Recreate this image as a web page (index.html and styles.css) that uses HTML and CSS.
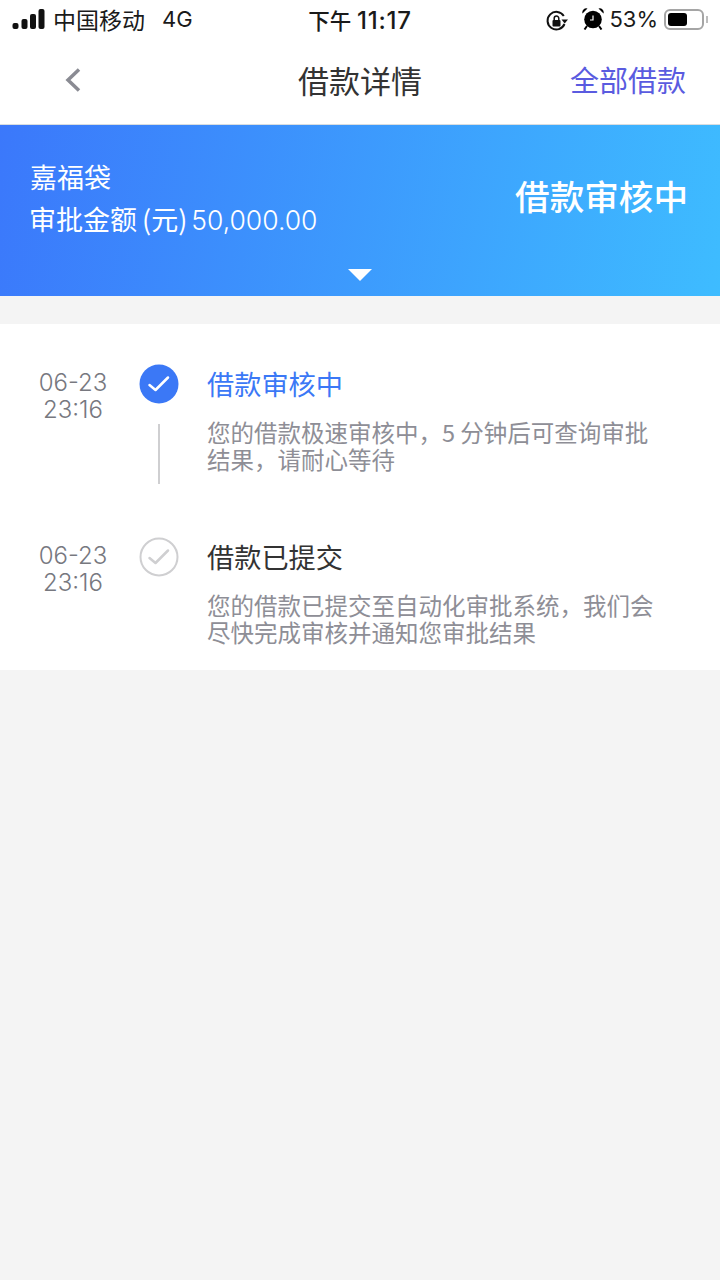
FILE: index.html
```html
<!DOCTYPE html>
<html lang="zh">
<head>
    <meta charset="UTF-8">
    <meta name="viewport" content="width=device-width, initial-scale=1.0">
    <title>借款详情</title>
    <link rel="stylesheet" href="styles.css">
</head>
<body>
    <div class="status-bar">
        <div class="status-left">
            <svg class="signal" width="33" height="20" viewBox="0 0 33 20">
                <rect x="0.500" y="14" width="6" height="6" rx="2"/>
                <rect x="9.500" y="10" width="6" height="10" rx="2"/>
                <rect x="18" y="5" width="6" height="15" rx="2"/>
                <rect x="26.500" y="0" width="6" height="20" rx="2"/>
            </svg>
            <span class="carrier">中国移动</span>
            <span class="network">4G</span>
        </div>
        <div class="status-time">下午 <span class="clock">11:17</span></div>
        <div class="status-right">
            <svg class="lock-icon" width="22" height="22" viewBox="0 0 22 22">
                <path d="M18.500 14A8.800 8.800 0 1 1 17.800 6" fill="none" stroke="#111" stroke-width="2"/>
                <path d="M22 9.500h-6.500l3.200 4z" fill="#111"/>
                <rect x="6.500" y="10" width="8" height="6.500" rx="1" fill="#111"/>
                <path d="M8.200 10V8.300a2.300 2.300 0 0 1 4.600 0V10" fill="none" stroke="#111" stroke-width="1.500"/>
            </svg>
            <svg class="alarm-icon" width="22" height="23" viewBox="0 0 22 23">
                <circle cx="11" cy="12.500" r="8.800" fill="#000"/>
                <path d="M0.500 6.500a4 4 0 0 1 5-5z M21.500 6.500a4 4 0 0 0 -5-5z" fill="#000"/>
                <path d="M5 19l-2.500 3.500M17 19l2.500 3.500" stroke="#000" stroke-width="2"/>
                <path d="M11 8.500v4.500H8" fill="none" stroke="#fff" stroke-width="1.200"/>
            </svg>
            <span class="battery-text">53%</span>
            <div class="battery">
                <div class="battery-level"></div>
            </div>
            <div class="battery-cap"></div>
        </div>
    </div>

    <div class="nav-bar">
        <svg class="back-icon" width="18" height="26" viewBox="0 0 18 26">
            <path d="M15 2.500L4 13l11 10.500" fill="none" stroke="#8a8b93" stroke-width="3.500"/>
        </svg>
        <div class="nav-title">借款详情</div>
        <div class="nav-link">全部借款</div>
    </div>

    <div class="banner">
        <div class="banner-row">
            <div class="banner-info">
                <div class="product">嘉福袋</div>
                <div class="amount">审批金额<span class="amount-unit">(元)</span><span class="amount-num">50,000.00</span></div>
            </div>
            <div class="banner-status">借款审核中</div>
        </div>
        <div class="arrow"></div>
    </div>

    <div class="timeline">
        <div class="step">
            <div class="step-time">06-23<br>23:16</div>
            <div class="step-mark">
                <svg width="40" height="40" viewBox="0 0 40 40">
                    <circle cx="20" cy="20" r="19.500" fill="#3b78f6"/>
                    <path d="M10.500 21l6 5L29 13.500" fill="none" stroke="#fff" stroke-width="2.500" stroke-linecap="round" stroke-linejoin="round"/>
                </svg>
                <div class="step-line"></div>
            </div>
            <div class="step-body">
                <div class="step-title step-title-active">借款审核中</div>
                <div class="step-desc">您的借款极速审核中，5 分钟后可查询审批结果，请耐心等待</div>
            </div>
        </div>
        <div class="step">
            <div class="step-time">06-23<br>23:16</div>
            <div class="step-mark">
                <svg width="40" height="40" viewBox="0 0 40 40">
                    <circle cx="20" cy="20" r="18.500" fill="none" stroke="#cfcfd1" stroke-width="2"/>
                    <path d="M10.500 21l6 5L29 13.500" fill="none" stroke="#cfcfd1" stroke-width="2.500" stroke-linecap="round" stroke-linejoin="round"/>
                </svg>
            </div>
            <div class="step-body">
                <div class="step-title">借款已提交</div>
                <div class="step-desc">您的借款已提交至自动化审批系统，我们会尽快完成审核并通知您审批结果</div>
            </div>
        </div>
    </div>
</body>
</html>
```

FILE: styles.css
```css
html, body {
    margin: 0;
    padding: 0;
}

body {
    width: 720px;
    min-height: 1280px;
    background-color: #f4f4f4;
    font-family: "Noto Sans CJK SC", "Noto Sans", sans-serif;
}

.status-bar {
    height: 40px;
    box-sizing: border-box;
    padding-bottom: 2px;
    background-color: #fff;
    color: #1a1a1a;
    display: grid;
    grid-template-columns: 1fr auto 1fr;
    align-items: center;
    font-size: 22px;
    font-family: Inter, "Noto Sans CJK SC", sans-serif;
}

.status-left {
    display: flex;
    align-items: center;
    padding-left: 12px;
}

.signal {
    fill: #111;
    margin-right: 8px;
}

.carrier {
    font-size: 23px;
}

.network {
    margin-left: 17px;
}

.status-time {
    font-weight: 500;
    font-size: 21.500px;
}

.clock {
    font-size: 24px;
    letter-spacing: 0.800px;
}

.status-right {
    display: flex;
    align-items: center;
    justify-content: flex-end;
    padding-right: 12px;
}

.lock-icon {
    margin-top: 3px;
}

.alarm-icon {
    margin-left: 14px;
    margin-bottom: 1px;
}

.battery-text {
    margin-left: 5px;
}

.battery {
    width: 40px;
    height: 21px;
    box-sizing: border-box;
    margin-left: 6px;
    padding: 2px;
    border: 2px solid #a5a5a5;
    border-radius: 6px;
}

.battery-level {
    width: 58%;
    height: 100%;
    background-color: #000;
    border-radius: 3px;
}

.battery-cap {
    width: 2px;
    height: 7px;
    margin-left: 2px;
    background-color: #bdbdbd;
}

.nav-bar {
    position: relative;
    height: 84px;
    background-color: #fff;
    border-bottom: 1px solid #d8dde0;
    display: flex;
    align-items: center;
    justify-content: center;
}

.back-icon {
    position: absolute;
    left: 64px;
    top: 27px;
}

.nav-title {
    font-size: 31px;
    color: #333;
    margin-bottom: 6px;
}

.nav-link {
    position: absolute;
    right: 34px;
    top: 18px;
    font-size: 29px;
    color: #5a5be0;
}

.banner {
    height: 171px;
    background: linear-gradient(100deg, #3b78fb 0%, #3ebcff 100%);
    color: #fff;
    box-sizing: border-box;
    padding: 31px 32px 0 30px;
    position: relative;
}

.banner-row {
    display: flex;
    justify-content: space-between;
    align-items: flex-start;
}

.product {
    font-size: 27px;
    line-height: 42px;
}

.amount {
    font-size: 27px;
    line-height: 42px;
    margin-left: -1px;
}

.amount-unit {
    font-size: 27px;
    margin-left: 5px;
}

.amount-num {
    font-family: Inter, sans-serif;
    font-size: 26.500px;
    font-weight: 300;
    margin-left: 4px;
}

.banner-status {
    font-size: 34.600px;
    line-height: 48px;
    margin-top: 15px;
    font-weight: 500;
}

.arrow {
    position: absolute;
    left: 348px;
    top: 144px;
    width: 0;
    height: 0;
    border-left: 12px solid transparent;
    border-right: 12px solid transparent;
    border-top: 12px solid #fff;
}

.timeline {
    margin-top: 28px;
    background-color: #fff;
    padding-top: 40px;
    height: 346px;
    box-sizing: border-box;
}

.step {
    display: flex;
    height: 173px;
}

.step-time {
    width: 146px;
    padding-top: 5px;
    box-sizing: border-box;
    text-align: center;
    font-family: Inter, sans-serif;
    font-weight: 300;
    font-size: 24px;
    line-height: 27px;
    color: #77787f;
}

.step-mark {
    width: 68px;
    margin-left: -7px;
    display: flex;
    flex-direction: column;
}

.step-line {
    width: 2px;
    height: 60px;
    margin: 20px 0 0 19px;
    background-color: #cfcfd1;
}

.step-body {
    width: 448px;
}

.step-title {
    font-size: 27.200px;
    line-height: 38px;
    color: #333;
}

.step-title-active {
    color: #3b78f6;
}

.step-desc {
    margin-top: 17px;
    font-size: 23.500px;
    line-height: 27px;
    color: #8e8e96;
}
```
